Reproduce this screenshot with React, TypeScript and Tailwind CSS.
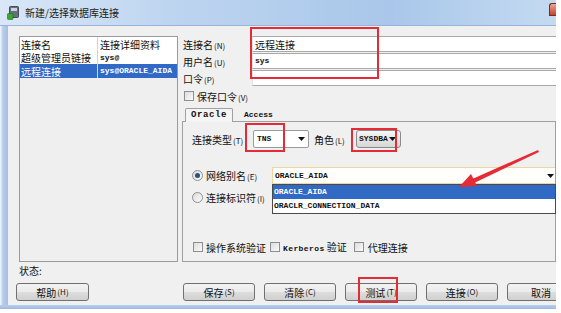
import React from 'react';

const mono = "[font-family:'Liberation_Mono',monospace] font-bold";

function Mn({ k }: { k: string }) {
  return <span className="text-[8px] ml-[1px]">({k})</span>;
}

function Tri({ className = '' }: { className?: string }) {
  return (
    <svg width="7" height="4" viewBox="0 0 7 4" className={className}>
      <path d="M0 0 L7 0 L3.5 4 Z" fill="#111" />
    </svg>
  );
}

function Check({ className = '' }: { className?: string }) {
  return <span className={`inline-block shrink-0 w-[10px] h-[10px] border border-[#8e8f8f] bg-[linear-gradient(135deg,#dcdcdc,#fbfbfb)] ${className}`} />;
}

function Radio({ on }: { on?: boolean }) {
  return (
    <span className="w-[11px] h-[11px] shrink-0 rounded-full border border-[#8e8f8f] bg-[linear-gradient(135deg,#dcdcdc,#fbfbfb)] flex items-center justify-center">
      {on && <span className="w-[5px] h-[5px] rounded-full bg-[#2a4f7a]" />}
    </span>
  );
}

function Btn({ children, w = 'w-[72px]' }: { children: React.ReactNode; w?: string }) {
  return (
    <div className={`${w} h-[18px] shrink-0 flex items-center justify-center rounded-[3px] border border-[#707070] bg-[linear-gradient(#f3f3f3,#ebebeb_48%,#dddddd_52%,#d0d0d0)] text-[10px]`}>
      {children}
    </div>
  );
}

function ListRow({ a, b, sel, h }: { a: string; b: string; sel?: boolean; h: string }) {
  return (
    <div className={`flex ${h} items-center ${sel ? 'bg-[#3169c6] text-white' : 'bg-white'}`}>
      <div className="w-[78px] pl-[1px] h-full flex items-center border-r border-[#d4d4d4]">{a}</div>
      <div className={`pl-[2px] text-[8px] ${mono}`}>{b}</div>
    </div>
  );
}

function InputRow({ label, k, value, isMono }: { label: string; k: string; value?: string; isMono?: boolean }) {
  return (
    <div className="h-[16px] flex items-center">
      <div className="w-[70px] shrink-0 pl-[1px]">
        {label}
        <Mn k={k} />
      </div>
      <div className={`flex-1 h-full bg-white border-t border-b border-l border-[#a9a9a9] border-l-[#dfe3e8] flex items-center pl-[2px] ${isMono ? `text-[8px] ${mono}` : ''}`}>
        {value}
      </div>
    </div>
  );
}

function AppIcon() {
  return (
    <svg width="12" height="14" viewBox="0 0 12 14" className="ml-[7px] shrink-0">
      <rect x="2.5" y="0.5" width="9" height="11" rx="1" fill="#66707c" stroke="#2f3640" strokeWidth="0.8" />
      <rect x="4" y="2" width="6" height="3" fill="#c9d3dd" />
      <rect x="0.5" y="7.5" width="5.5" height="6" rx="0.8" fill="#3fa535" stroke="#1f6b1a" strokeWidth="0.6" />
    </svg>
  );
}

export default function App() {
  return (
    <div className="relative w-[561px] h-[313px] bg-white overflow-hidden text-[10px] text-[#111] [font-family:'Noto_Sans_CJK_SC','Liberation_Sans',sans-serif]">
      <div className="w-[556px] h-[309px] flex flex-col">
        {/* title bar */}
        <div className="h-[26px] shrink-0 flex items-center bg-[linear-gradient(90deg,#d9e7f7,#bed5f0_30%,#a9c7ea_70%,#c4daf1)] border-b border-[#97b4dc]">
          <AppIcon />
          <span className="ml-[6px] text-[10px] text-[#1b1b1b]">新建/选择数据库连接</span>
          <div className="ml-auto self-start mt-[3px] w-[7px] h-[13px] rounded-tl-[3px] bg-[linear-gradient(#eaa597,#c8412c)] border border-r-0 border-[#7a2a20]" />
        </div>

        <div className="flex-1 flex min-h-0">
          <div className="w-[8px] shrink-0 bg-[linear-gradient(90deg,#f6f9fd,#b7cfec_35%,#a3bee3)]" />
          <div className="flex-1 min-w-0 overflow-hidden bg-[#f0f0f0] flex flex-col">
            <div className="flex pt-[10px] pl-[11px]">
              {/* connection list */}
              <div className="w-[159px] h-[226px] shrink-0 border border-[#9a9a9a] bg-[#efefef] flex flex-col">
                <div className="flex h-[14px] items-center bg-white">
                  <div className="w-[78px] pl-[1px] h-full flex items-center border-r border-[#d4d4d4]">连接名</div>
                  <div className="pl-[2px]">连接详细资料</div>
                </div>
                <ListRow a="超级管理员链接" b="sys@" h="h-[13px]" />
                <ListRow a="远程连接" b="sys@ORACLE_AIDA" sel h="h-[14px]" />
              </div>

              {/* form */}
              <div className="ml-[4px] flex-1 min-w-0 flex flex-col">
                <div className="flex flex-col gap-[1px]">
                  <InputRow label="连接名" k="N" value="远程连接" />
                  <InputRow label="用户名" k="U" value="sys" isMono />
                  <InputRow label="口令" k="P" />
                </div>
                <div className="mt-[3px] h-[14px] flex items-center pl-[2px]">
                  <Check />
                  <span className="ml-[3px]">
                    保存口令
                    <Mn k="V" />
                  </span>
                </div>

                {/* tabs */}
                <div className="mt-[4px] h-[14px] flex items-end">
                  <div className={`relative top-[1px] z-10 ml-[3px] w-[48px] h-[14px] bg-[#f4f4f4] border border-b-0 border-[#a0a0a0] rounded-t-[2px] flex items-center justify-center text-[9px] tracking-[0.6px] ${mono}`}>
                    Oracle
                  </div>
                  <div className={`ml-[11px] h-[12px] flex items-center text-[8px] ${mono}`}>Access</div>
                </div>
                <div className="h-[141px] border border-[#a0a0a0] flex flex-col pt-[8px] pl-[9px]">
                  <div className="h-[18px] flex items-center">
                    <div className="w-[61px] shrink-0">
                      连接类型
                      <Mn k="T" />
                    </div>
                    <div className={`w-[56px] shrink-0 h-full bg-white border border-[#9c9c9c] rounded-[2px] flex items-center pl-[3px] text-[8px] ${mono}`}>
                      TNS
                      <Tri className="ml-auto mr-[3px]" />
                    </div>
                    <div className="ml-[5px] w-[42px] shrink-0">
                      角色
                      <Mn k="L" />
                    </div>
                    <div className={`w-[45px] shrink-0 h-full border border-[#8a8a8a] rounded-[3px] bg-[linear-gradient(#f6f6f6,#e6e6e6_50%,#d6d6d6)] flex items-center pl-[2px] text-[8px] ${mono}`}>
                      SYSDBA
                      <Tri className="ml-[1px]" />
                    </div>
                  </div>

                  <div className="mt-[19px] h-[17px] flex items-center">
                    <div className="w-[80px] shrink-0 flex items-center">
                      <Radio on />
                      <span className="ml-[3px]">
                        网络别名
                        <Mn k="E" />
                      </span>
                    </div>
                    <div className="relative flex-1 h-full">
                      <div className={`h-full bg-[#fffefa] border border-[#ead7a6] border-r-0 flex items-center pl-[2px] text-[8px] ${mono}`}>
                        ORACLE_AIDA
                        <Tri className="ml-auto mr-[1px]" />
                      </div>
                      <div className={`absolute left-0 right-[-1px] top-full h-[30px] bg-white border border-[#4a4a4a] flex flex-col z-10 text-[8px] ${mono}`}>
                        <div className="h-[14px] bg-[#316ac5] text-white flex items-center pl-[1px]">ORACLE_AIDA</div>
                        <div className="h-[14px] flex items-center pl-[1px]">ORACLR_CONNECTION_DATA</div>
                      </div>
                    </div>
                  </div>

                  <div className="mt-[6px] h-[14px] flex items-center">
                    <Radio />
                    <span className="ml-[3px]">
                      连接标识符
                      <Mn k="I" />
                    </span>
                  </div>

                  <div className="mt-[36px] h-[14px] flex items-center pl-[1px]">
                    <Check />
                    <span className="ml-[3px]">操作系统验证</span>
                    <Check className="ml-[4px]" />
                    <span className="ml-[3px]">
                      <span className={`text-[8px] tracking-[0.4px] ${mono}`}>Kerberos</span> 验证
                    </span>
                    <Check className="ml-[7px]" />
                    <span className="ml-[4px]">代理连接</span>
                  </div>
                </div>
              </div>
            </div>

            <div className="mt-[2px] h-[13px] pl-[11px] flex items-center">状态:</div>

            <div className="mt-[6px] flex pl-[8px]">
              <Btn w="w-[73px]">
                帮助<Mn k="H" />
              </Btn>
              <div className="ml-[94px] flex gap-[9px]">
                <Btn>
                  保存<Mn k="S" />
                </Btn>
                <Btn>
                  清除<Mn k="C" />
                </Btn>
                <Btn>
                  测试<Mn k="T" />
                </Btn>
                <Btn>
                  连接<Mn k="O" />
                </Btn>
                <Btn w="w-[68px]">取消</Btn>
              </div>
            </div>
          </div>
        </div>
        <div className="h-[4px] shrink-0 bg-[linear-gradient(#b9cfec,#9db9e0)]" />
      </div>

      {/* red annotation boxes */}
      <div className="absolute left-[250px] top-[27px] w-[129px] h-[52px] border-2 border-[#e52b35]" />
      <div className="absolute left-[245px] top-[123px] w-[40px] h-[29px] border-2 border-[#e52b35]" />
      <div className="absolute left-[351px] top-[128px] w-[46px] h-[24px] border-2 border-[#e52b35]" />
      <div className="absolute left-[358px] top-[277px] w-[40px] h-[26px] border-2 border-[#e52b35]" />

      {/* red arrow */}
      <svg className="absolute left-0 top-0 z-20" width="561" height="313" viewBox="0 0 561 313">
        <polygon points="538,150 539,152 472,184 470,180" fill="#e52b35" />
        <polygon points="459,187 471,174 477,186" fill="#e52b35" />
      </svg>
    </div>
  );
}
